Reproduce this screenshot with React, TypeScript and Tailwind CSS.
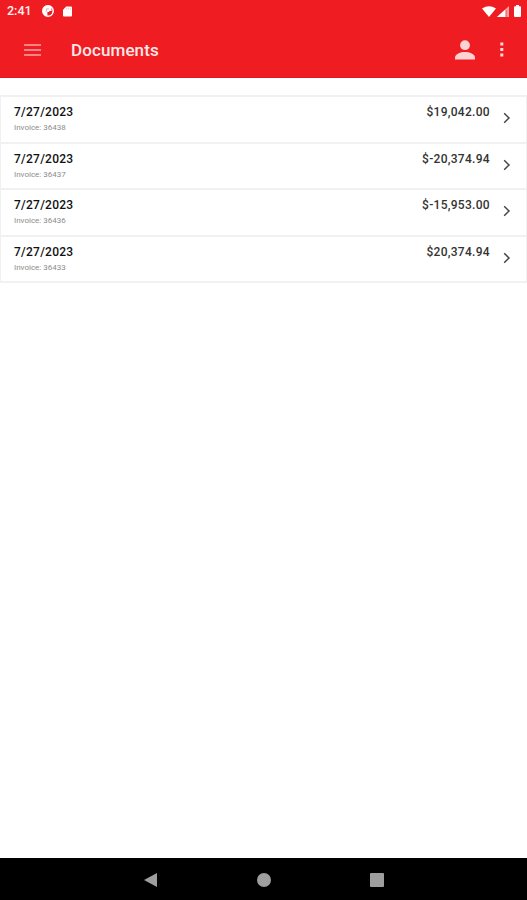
const documents = [
  { date: "7/27/2023", invoice: "36438", amount: "$19,042.00" },
  { date: "7/27/2023", invoice: "36437", amount: "$-20,374.94" },
  { date: "7/27/2023", invoice: "36436", amount: "$-15,953.00" },
  { date: "7/27/2023", invoice: "36433", amount: "$20,374.94" },
];

function StatusBar() {
  return (
    <div className="flex h-[22px] items-center pl-[7px] pr-[6px] text-white">
      <span className="w-[35px] pt-px text-[12.5px] leading-none font-medium text-[#fff0f0]">
        2:41
      </span>
      <svg className="h-[12px] w-[12px]" viewBox="0 0 12 12">
        <circle cx="6" cy="6" r="5.2" fill="none" stroke="white" strokeWidth="1.5" />
        <path d="M.8 3 3.5.8H8.5L9.5 3V6H7.2V7H5.4V11H4L.8 8.5Z" fill="white" />
        <path d="M4.4 6.8V3.9H7" fill="none" stroke="#f58f91" strokeWidth=".8" />
        <path d="M6 8H8.4V6.6H9.8V8.2L8 10H6Z" fill="#ef1c21" />
      </svg>
      <svg className="ml-[9px] h-[11px] w-[9px]" viewBox="0 0 10 11">
        <path d="M3.5 0H9Q10 0 10 1V10Q10 11 9 11H1Q0 11 0 10V3.5Z" fill="white" />
        <path d="M4 1.5V3.5M6 1.5V3.5M8 1.5V3.5" stroke="#f8a5a7" strokeWidth=".7" />
      </svg>
      <svg className="ml-auto h-[11px] w-[14px]" viewBox="0 0 14 11">
        <path d="M0 2.6Q7-2.2 14 2.6L7 11Z" fill="white" />
      </svg>
      <svg className="ml-px h-[11px] w-[12px]" viewBox="0 0 12 11">
        <path d="M12 0V11H0Z" fill="#f8a5a7" />
        <path d="M8 3.7V11H0Z" fill="white" />
        <path d="M9.7 4V11" stroke="#f4696c" strokeWidth="1" />
      </svg>
      <svg className="ml-[5px] h-[12px] w-[7px]" viewBox="0 0 7 12">
        <path d="M2 0H5V1.2H6Q7 1.2 7 2.2V11Q7 12 6 12H1Q0 12 0 11V2.2Q0 1.2 1 1.2H2Z" fill="white" />
      </svg>
    </div>
  );
}

function AppBar() {
  return (
    <div className="flex h-14 items-center pl-6 pr-[23px]">
      <svg className="h-[12px] w-[17px]" viewBox="0 0 17 12">
        <path d="M0 1H17M0 6H17M0 11H17" stroke="#f9a5a7" strokeWidth="1.3" />
      </svg>
      <h1 className="ml-[30px] pt-[2px] text-[17px] font-medium tracking-[0.1px] text-[#ffe8e8]">
        Documents
      </h1>
      <svg className="ml-auto h-5 w-5" viewBox="0 0 20 20">
        <circle cx="10" cy="5.2" r="4.9" fill="#fcd2d3" />
        <path d="M0 19.5V17.6C0 14 5.5 12 10 12S20 14 20 17.6V19.5Z" fill="#fcd2d3" />
      </svg>
      <svg className="-mt-px ml-[25px] h-[15px] w-[4px]" viewBox="0 0 4 15">
        <path d="M.3.5H3.3V3.5H.3ZM.3 6H3.3V9H.3ZM.3 11.5H3.3V14.5H.3Z" fill="#fcdcdc" />
      </svg>
    </div>
  );
}

function NavBar() {
  return (
    <div className="flex h-[42px] items-center justify-between bg-black pl-[144px] pr-[143px] pt-px">
      <svg className="h-[14px] w-[13px]" viewBox="0 0 13 14">
        <path d="M0 7 13 0V14Z" fill="#9e9e9e" />
      </svg>
      <div className="h-[14px] w-[14px] rounded-full bg-[#9e9e9e]" />
      <div className="h-[14px] w-[14px] rounded-[1px] bg-[#9e9e9e]" />
    </div>
  );
}

export default function App() {
  return (
    <div className="flex h-[900px] w-full flex-col bg-white font-[Roboto,sans-serif]">
      <header className="h-[78px] bg-[#ef1c21] border-b border-[#d91a1f]">
        <StatusBar />
        <AppBar />
      </header>

      <main className="flex-1 pt-[17px]">
        <ul className="border-x border-t-2 border-[#f1f1f1]">
          {documents.map((doc) => (
            <li
              key={doc.invoice}
              className="flex h-[46.5px] border-b-2 border-[#f1f1f1] pl-[13px] pr-[15px]"
            >
              <div className="pt-[8px]">
                <div className="text-[12px] leading-[14px] font-medium tracking-[0.25px] text-[#111]">
                  {doc.date}
                </div>
                <div className="mt-[4px] text-[8px] leading-[9px] text-[#8c8c8c]">
                  Invoice: {doc.invoice}
                </div>
              </div>
              <div className="ml-auto pt-[8px] text-[12px] leading-[14px] font-medium tracking-[0.3px] text-[#333]">
                {doc.amount}
              </div>
              <svg className="ml-[13px] mt-[15px] h-[12px] w-[8px]" viewBox="0 0 8 12">
                <path d="M1.2 1.2 6 6 1.2 10.8" fill="none" stroke="#444" strokeWidth="1.5" />
              </svg>
            </li>
          ))}
        </ul>
      </main>

      <NavBar />
    </div>
  );
}
